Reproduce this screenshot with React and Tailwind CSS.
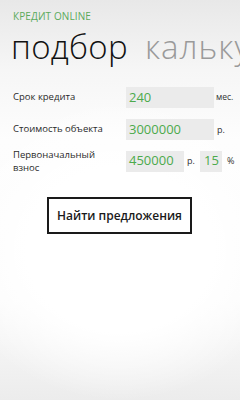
export default function App() {
  const font = { fontFamily: '"Open Sans", "Noto Sans", sans-serif' };
  return (
    <div
      className="w-[240px] h-[400px] overflow-hidden relative"
      style={{
        ...font,
        background:
          "radial-gradient(ellipse 170px 150px at 120px 250px, #ffffff 0%, #ffffff 55%, rgba(255,255,255,0) 100%), linear-gradient(to bottom, #e8e8e8 0px, #f6f6f6 70px, #fdfdfd 140px, #fbfbfb 300px, #ececec 400px)",
      }}
    >
      <div className="pl-[13px] pt-[10px] text-[10px] leading-[12px] text-[#5aaa5a] tracking-[0.1px]">
        КРЕДИТ ONLINE
      </div>
      <div className="pl-[11px] mt-[7px] text-[33px] leading-[36px] font-light whitespace-nowrap tracking-[0.3px]">
        <span className="text-[#111]">подбор</span>
        <span className="ml-[17px] text-[#9a9a9a] tracking-[1px]">калькулятор</span>
      </div>

      <div className="mt-[22px] pl-[13px] flex flex-col">
        <div className="flex items-center h-[21px]">
          <div className="w-[113px] text-[9.5px] text-[#2a2a2a]">Срок кредита</div>
          <div className="w-[88px] h-[21px] bg-[#ebebeb] flex items-center pl-[3px] text-[13px] text-[#4caa4c]">240</div>
          <div className="ml-[2px] text-[8.5px] text-[#333]">мес.</div>
        </div>
        <div className="flex items-center h-[21px] mt-[11px]">
          <div className="w-[113px] text-[9.5px] text-[#2a2a2a]">Стоимость объекта</div>
          <div className="w-[88px] h-[21px] bg-[#ebebeb] flex items-center pl-[3px] text-[13px] text-[#4caa4c]">3000000</div>
          <div className="ml-[3px] text-[9px] text-[#333]">р.</div>
        </div>
        <div className="flex items-center h-[26px] mt-[8px]">
          <div className="w-[113px] text-[9.5px] leading-[13px] text-[#2a2a2a]">
            Первоначальный
            <br />
            взнос
          </div>
          <div className="w-[58px] h-[21px] bg-[#ebebeb] flex items-center pl-[3px] text-[13px] text-[#4caa4c]">450000</div>
          <div className="ml-[3px] w-[13px] text-[9px] text-[#333]">р.</div>
          <div className="w-[22px] h-[21px] bg-[#ebebeb] flex items-center pl-[4px] text-[13px] text-[#4caa4c]">15</div>
          <div className="ml-[5px] text-[9px] text-[#333]">%</div>
        </div>
      </div>

      <div className="mt-[23px] flex pl-[47px]">
        <div className="w-[145px] h-[37px] border-2 border-[#1a1a1a] flex items-center justify-center text-[12px] font-semibold text-[#1a1a1a]">
          Найти предложения
        </div>
      </div>
    </div>
  );
}
